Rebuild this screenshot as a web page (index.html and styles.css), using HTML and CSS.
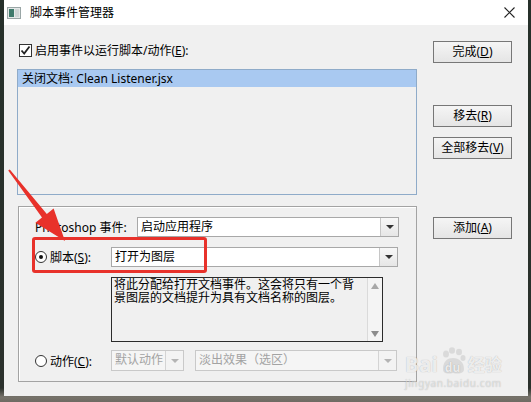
FILE: index.html
```html
<!DOCTYPE html>
<html lang="zh-CN">

<head>
    <meta charset="UTF-8">
    <meta name="viewport" content="width=device-width, initial-scale=1.0">
    <title>脚本事件管理器</title>
    <link rel="stylesheet" href="styles.css">
</head>

<body>
    <div class="screen">

        <div class="window">
            <div class="titleBar">
                <svg class="appIcon" width="14" height="12" viewBox="0 0 14 12">
                    <rect x="0.5" y="0.5" width="13" height="11" fill="#e4e8e8" stroke="#9aa6a6" />
                    <rect x="2" y="2" width="5" height="8" fill="#3f7b6c" />
                    <rect x="8" y="2" width="4" height="8" fill="#cfd6d6" />
                </svg>
                <span class="titleText">脚本事件管理器</span>
                <svg class="closeIcon" width="11" height="11" viewBox="0 0 11 11">
                    <path d="M0.5 0.5 L10.5 10.5 M10.5 0.5 L0.5 10.5" stroke="#222" stroke-width="1.1" fill="none" />
                </svg>
            </div>

            <div class="client">
                <div class="leftCol">
                    <div class="checkRow">
                        <span class="checkBox">
                            <svg width="11" height="11" viewBox="0 0 11 11">
                                <path d="M1.5 5.5 L4.2 8.5 L9.5 1.5" stroke="#222" stroke-width="1.8" fill="none" />
                            </svg>
                        </span>
                        <span>启用事件以运行脚本/动作(<u>E</u>):</span>
                    </div>

                    <div class="listBox">
                        <div class="listItem selected">关闭文档: Clean Listener.jsx</div>
                    </div>

                    <div class="groupBox">
                        <div class="formRow">
                            <span class="rowLabel eventLabel">Photoshop 事件:</span>
                            <div class="combo eventCombo">
                                <span class="comboText">启动应用程序</span>
                                <span class="comboBtn"></span>
                            </div>
                        </div>

                        <div class="formRow">
                            <span class="rowLabel radioLabel">
                                <span class="radio checked"></span>
                                <span>脚本(<u>S</u>):</span>
                            </span>
                            <div class="combo scriptCombo">
                                <span class="comboText">打开为图层</span>
                                <span class="comboBtn"></span>
                            </div>
                        </div>

                        <div class="descBox">
                            <div class="descText">
                                <div>将此分配给打开文档事件。这会将只有一个背</div>
                                <div>景图层的文档提升为具有文档名称的图层。</div>
                            </div>
                            <div class="scrollBar">
                                <span class="scrollUp"></span>
                                <span class="scrollDown"></span>
                            </div>
                        </div>

                        <div class="formRow actionRow">
                            <span class="rowLabel radioLabel">
                                <span class="radio"></span>
                                <span>动作(<u>C</u>):</span>
                            </span>
                            <div class="combo disabled setCombo">
                                <span class="comboText">默认动作</span>
                                <span class="comboBtn"></span>
                            </div>
                            <div class="combo disabled actCombo">
                                <span class="comboText">淡出效果（选区）</span>
                                <span class="comboBtn"></span>
                            </div>
                        </div>
                    </div>
                </div>

                <div class="rightCol">
                    <div class="button btnDone">完成(<u>D</u>)</div>
                    <div class="button btnRemove">移去(<u>R</u>)</div>
                    <div class="button btnRemoveAll">全部移去(<u>V</u>)</div>
                    <div class="button btnAdd">添加(<u>A</u>)</div>
                </div>
            </div>
        </div>

        <!-- annotation drawn over the dialog -->
        <svg class="redArrow" width="531" height="402" viewBox="0 0 531 402">
            <polygon points="9.8,169.4 46.8,213.9 53.6,208.6 65,241 35.4,222.8 42,217.5 8.2,170.6" fill="#e8312a" />
        </svg>
        <div class="highlight"></div>

        <div class="watermark">
            <div class="wmLogo">
                <span>Bai</span>
                <span class="paw">
                    <svg width="26" height="28" viewBox="0 0 26 28">
                        <ellipse cx="6" cy="7" rx="3" ry="3.5" />
                        <ellipse cx="12" cy="3.5" rx="3" ry="3.3" />
                        <ellipse cx="19" cy="5" rx="3" ry="3.3" />
                        <ellipse cx="23" cy="11" rx="2.5" ry="3" />
                        <path d="M3 22 C3 14 8 11 13 11 C19 11 24 15 24 22 C24 27 18 27 13 26 C8 27 3 27 3 22 Z" />
                    </svg>
                    <span class="pawText">du</span>
                </span>
                <span class="wmCn">经验</span>
            </div>
            <div class="wmUrl">jingyan.baidu.com</div>
        </div>

    </div>
</body>

</html>
```

FILE: styles.css
```css
* {
    margin: 0;
    padding: 0;
    box-sizing: border-box;
}

html,
body {
    width: 100%;
    height: 100%;
}

body {
    font-family: "Noto Sans", "Noto Sans CJK SC", sans-serif;
    font-size: 12px;
    color: #000;
    background: #27302b;
}

.screen {
    position: relative;
    width: 531px;
    height: 402px;
    padding-left: 4px;
    overflow: hidden;
    background: linear-gradient(to bottom, #26302a 0, #2b312c 388px, #77736b 397px, #6e6a62 402px);
}

.window {
    display: flex;
    flex-direction: column;
    width: 524px;
    height: 396px;
    background-color: #f0f0f0;
}

.titleBar {
    display: flex;
    align-items: center;
    height: 25px;
    padding-left: 3px;
    padding-right: 13px;
    background-color: #fff;
}

.appIcon {
    margin-right: 9px;
}

.titleText {
    flex: 1;
    line-height: 25px;
}

.client {
    flex: 1;
    display: flex;
    padding-left: 13px;
}

.leftCol {
    width: 400px;
    padding-top: 17px;
}

.checkRow {
    display: flex;
    align-items: center;
    height: 16px;
    padding-left: 2px;
    margin-bottom: 11px;
}

.checkBox {
    display: flex;
    align-items: center;
    justify-content: center;
    width: 13px;
    height: 13px;
    margin-right: 3px;
    border: 1px solid #333;
    background-color: #fff;
}

.listBox {
    height: 126px;
    border: 1px solid #8fabc9;
    background-color: #f0f0f0;
}

.listItem {
    height: 17px;
    line-height: 17px;
    padding-left: 4px;
}

.listItem.selected {
    background-color: #a9c9f1;
}

.groupBox {
    width: 399px;
    height: 176px;
    margin-top: 11px;
    margin-left: 1px;
    padding-top: 10px;
    padding-left: 16px;
    border: 1px solid #a3a3a3;
    box-shadow: inset 1px 1px 0 #fff;
}

.formRow {
    display: flex;
    align-items: center;
    height: 20px;
    margin-bottom: 10px;
}

.rowLabel {
    display: flex;
    align-items: center;
    flex-shrink: 0;
}

.eventLabel {
    width: 102px;
}

.radioLabel {
    width: 76px;
}

.radio {
    position: relative;
    width: 12px;
    height: 12px;
    margin-right: 3px;
    border: 1px solid #333;
    border-radius: 50%;
    background-color: #fff;
}

.radio.checked::after {
    content: "";
    position: absolute;
    left: 3px;
    top: 3px;
    width: 4px;
    height: 4px;
    border-radius: 50%;
    background-color: #111;
}

.combo {
    display: flex;
    height: 20px;
    border: 1px solid #a8a8a8;
    background-color: #fff;
}

.eventCombo {
    width: 262px;
}

.scriptCombo {
    width: 287px;
}

.comboText {
    flex: 1;
    padding-left: 3px;
    line-height: 18px;
    white-space: nowrap;
    overflow: hidden;
}

.comboBtn {
    display: flex;
    align-items: center;
    justify-content: center;
    width: 18px;
    border-left: 1px solid #c6c6c6;
    background: linear-gradient(#f7f7f7, #e6e6e6);
}

.comboBtn::after {
    content: "";
    border-left: 4px solid transparent;
    border-right: 4px solid transparent;
    border-top: 4px solid #333;
}

.combo.disabled {
    border-color: #c9c9c9;
    background-color: #f5f5f5;
    color: #a3a3a3;
}

.combo.disabled .comboBtn {
    background: #f3f3f3;
    border-left-color: #d4d4d4;
}

.combo.disabled .comboBtn::after {
    border-top-color: #b4b4b4;
}

.descBox {
    display: flex;
    width: 272px;
    height: 65px;
    margin-left: 76px;
    margin-bottom: 8px;
    border: 1px solid #2b2b2b;
    background-color: #f0f0f0;
}

.descText {
    flex: 1;
    padding: 1px 2px 0 2px;
    font-family: "Liberation Sans", "Noto Sans CJK SC", sans-serif;
    line-height: 13px;
    white-space: nowrap;
}

.descText div {
    height: 13px;
}

.scrollBar {
    display: flex;
    flex-direction: column;
    justify-content: space-between;
    width: 15px;
    border-left: 1px solid #dadada;
    background-color: #f4f4f4;
}

.scrollUp,
.scrollDown {
    display: flex;
    align-items: center;
    justify-content: center;
    height: 15px;
}

.scrollUp::after {
    content: "";
    border-left: 4px solid transparent;
    border-right: 4px solid transparent;
    border-bottom: 6px solid #a8a8a8;
}

.scrollDown::after {
    content: "";
    border-left: 4px solid transparent;
    border-right: 4px solid transparent;
    border-top: 6px solid #8c8c8c;
}

.actionRow {
    height: 21px;
}

.actionRow .combo {
    height: 21px;
}

.setCombo {
    width: 73px;
    margin-right: 11px;
}

.actCombo {
    width: 202px;
}

.rightCol {
    display: flex;
    flex-direction: column;
    width: 79px;
    margin-left: 16px;
    padding-top: 16px;
}

.button {
    height: 22px;
    line-height: 20px;
    text-align: center;
    border: 1px solid #777;
    background: linear-gradient(#f5f5f5, #e5e5e5);
}

.btnRemove {
    margin-top: 42px;
}

.btnRemoveAll {
    margin-top: 10px;
}

.btnAdd {
    margin-top: 58px;
}

.redArrow {
    position: absolute;
    left: 0;
    top: 0;
    pointer-events: none;
}

.highlight {
    position: absolute;
    left: 32px;
    top: 237px;
    width: 175px;
    height: 36px;
    border: 3px solid #e8322b;
    border-radius: 3px;
}

.watermark {
    position: absolute;
    left: 405px;
    top: 346px;
    width: 100px;
    color: rgba(255, 255, 255, 0.8);
    text-shadow: 0 0 1px rgba(0, 0, 0, 0.3);
}

.wmLogo {
    display: flex;
    align-items: flex-end;
    height: 29px;
    font-size: 21px;
    font-weight: bold;
    line-height: 22px;
}

.wmCn {
    font-size: 17px;
    line-height: 20px;
}

.paw {
    position: relative;
    width: 26px;
    height: 28px;
    margin: 0 2px;
}

.paw svg {
    fill: rgba(212, 212, 212, 0.8);
}

.pawText {
    position: absolute;
    left: 5px;
    bottom: 1px;
    font-size: 12px;
    line-height: 12px;
}

.wmUrl {
    margin-top: 3px;
    font-size: 10px;
    line-height: 11px;
    letter-spacing: 0.6px;
    color: rgba(255, 255, 255, 0.55);
}
```
